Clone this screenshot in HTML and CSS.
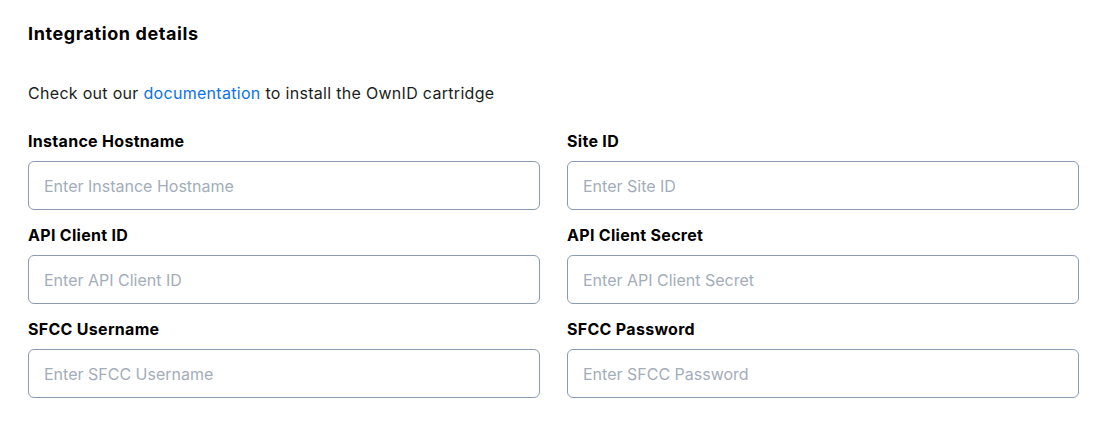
FILE: index.html
```html
<!DOCTYPE html>
<html lang="en">
<head>
<meta charset="utf-8">
<title>Integration details</title>
<link rel="stylesheet" href="styles.css">
</head>
<body>
<section class="panel">
  <h2 class="title">Integration details</h2>
  <p class="intro">Check out our <a href="#" class="link">documentation</a> to install the OwnID cartridge</p>
  <form class="grid">
    <div class="field">
      <label class="label" for="host">Instance Hostname</label>
      <input class="input" id="host" type="text" placeholder="Enter Instance Hostname">
    </div>
    <div class="field">
      <label class="label" for="site">Site ID</label>
      <input class="input" id="site" type="text" placeholder="Enter Site ID">
    </div>
    <div class="field">
      <label class="label" for="cid">API Client ID</label>
      <input class="input" id="cid" type="text" placeholder="Enter API Client ID">
    </div>
    <div class="field">
      <label class="label" for="csec">API Client Secret</label>
      <input class="input" id="csec" type="text" placeholder="Enter API Client Secret">
    </div>
    <div class="field">
      <label class="label" for="user">SFCC Username</label>
      <input class="input" id="user" type="text" placeholder="Enter SFCC Username">
    </div>
    <div class="field">
      <label class="label" for="pass">SFCC Password</label>
      <input class="input" id="pass" type="text" placeholder="Enter SFCC Password">
    </div>
  </form>
</section>
</body>
</html>
```

FILE: styles.css
```css
* { box-sizing: border-box; }
html, body { margin: 0; padding: 0; background: #ffffff; }
body {
  font-family: Inter, "Liberation Sans", Arial, sans-serif;
  color: #111418;
}
.panel {
  padding: 22px 31px 0 28px;
}
.title {
  margin: 0;
  font-size: 18px;
  line-height: 24px;
  font-weight: 700;
  letter-spacing: 0.6px;
  color: #000;
}
.intro {
  margin: 35px 0 0;
  font-size: 16px;
  line-height: 24px;
  letter-spacing: 0.3px;
  color: #1a1d21;
}
.link { color: #0a72ec; text-decoration: none; }
.grid {
  margin-top: 24px;
  display: grid;
  grid-template-columns: 1fr 1fr;
  column-gap: 27px;
  row-gap: 13px;
}
.field { display: flex; flex-direction: column; gap: 8px; }
.label {
  font-size: 16px;
  line-height: 24px;
  font-weight: 700;
  letter-spacing: 0.3px;
  color: #000;
}
.input {
  height: 49px;
  border: 1px solid #8a9bb0;
  border-radius: 6px;
  padding: 0 15px;
  font-family: inherit;
  font-size: 16px;
  color: #1a1d21;
  background: #fff;
  outline: none;
}
.input::placeholder { color: #a3adba; }
```
